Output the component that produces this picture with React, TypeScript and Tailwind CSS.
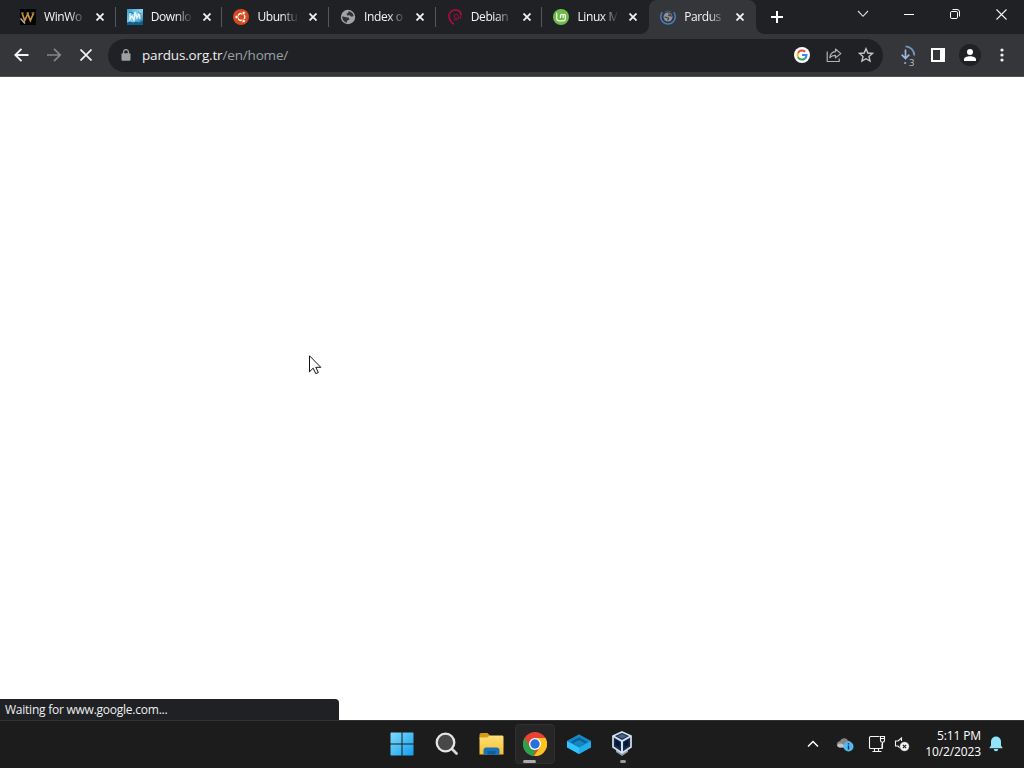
import type { ReactNode } from "react";

function WinWorldIcon() {
  return (
    <svg width="16" height="16" viewBox="0 0 16 16">
      <rect width="16" height="16" fill="#050505" />
      <path d="M2.2 4.500l2.500 7L7.800 5l2.600 6.500 3-7" fill="none" stroke="#c59638" strokeWidth="1.700" />
      <path d="M.5 9.500l4.500 5" stroke="#b9b9b9" strokeWidth="1.3" />
      <path d="M1.200 4h2.500M6.500 4h2.500M11.500 4h3" stroke="#d6a84a" strokeWidth="1" />
    </svg>
  );
}

function DownloadSiteIcon() {
  return (
    <svg width="16" height="16" viewBox="0 0 16 16">
      <defs>
        <linearGradient id="dl" x1="0" y1="0" x2="1" y2="1">
          <stop offset="0" stopColor="#2f9bc4" />
          <stop offset=".5" stopColor="#8ed3ee" />
          <stop offset="1" stopColor="#0a6ba6" />
        </linearGradient>
      </defs>
      <rect width="16" height="16" fill="url(#dl)" />
      <path d="M0 13.500l3-1 3 1 3-1 3 1 4-2v4.500H0z" fill="#10608f" />
      <path d="M3 4v6l2-3 2 4 1-8 2 6 2-4 1 5" fill="none" stroke="#e9faff" strokeWidth="1.3" />
      <path d="M2 4l3-1 1 2M11 3l3 2" fill="none" stroke="#14628e" strokeWidth=".7" />
    </svg>
  );
}

function UbuntuIcon() {
  return (
    <svg width="16" height="16" viewBox="0 0 16 16">
      <circle cx="8" cy="8" r="8" fill="#d9491e" />
      <circle cx="8.300" cy="8" r="3.500" fill="none" stroke="#fff" strokeWidth="1.400" />
      <g fill="#fff" stroke="#d9491e" strokeWidth=".8">
        <circle cx="3.600" cy="8" r="1.700" />
        <circle cx="10.700" cy="3.900" r="1.700" />
        <circle cx="10.700" cy="12.100" r="1.700" />
      </g>
    </svg>
  );
}

function GlobeIcon() {
  return (
    <svg width="16" height="16" viewBox="0 0 16 16">
      <circle cx="8" cy="8" r="7.2" fill="#a1a4a7" />
      <path d="M2.3 7.200L6 8.300l3 .4.400 1.800-2.400 1.200v1.900C4.200 13.200 2 10.600 2.300 7.200z" fill="#303235" />
      <path d="M8.500 2.300c2.600.2 4.600 2 5.100 4.700l-2 .7-2-1.500-2.300.2-.9-1.700 1.800-.8z" fill="#303235" />
    </svg>
  );
}

function DebianIcon() {
  return (
    <svg width="16" height="16" viewBox="0 0 16 16" fill="none" stroke="#b20d40" strokeLinecap="round">
      <path d="M9.200 8.800c-2 .6-3-1.500-1.500-2.900 1.700-1.400 4.200-.2 4 2-.2 2.100-2.500 3.400-4.500 2.800" strokeWidth="1" />
      <path d="M14 5.500C13.800 2 10.500.5 7.500 1 3.500 1.500 1.300 5 2.100 8.500c.5 2.500 2.100 4.800 4.400 6.400" strokeWidth="1.5" />
      <path d="M13.900 5.300c.5 1.700-.1 3.200-1 4.400" strokeWidth="1" />
    </svg>
  );
}

function MintIcon() {
  return (
    <svg width="16" height="16" viewBox="0 0 16 16">
      <circle cx="8" cy="8" r="8" fill="#70b94d" />
      <path d="M3.700 3.800v5.400c0 1.700 1 2.700 2.600 2.700h3.500c1.600 0 2.600-1 2.600-2.600V6.800c0-1.900-2.200-1.900-2.200 0V9M10.200 6.800c0-1.900-2.700-1.900-2.700 0V9" fill="none" stroke="#f2ffe9" strokeWidth="1.200" />
    </svg>
  );
}

function PardusLoadingIcon() {
  return (
    <svg width="16" height="16" viewBox="0 0 16 16" fill="none">
      <circle cx="8" cy="8" r="4.500" fill="#909397" />
      <path d="M4.500 8l2.500.6 1.500.3v1.400l-1.300.8M8 4.800c1.700 0 3 .9 3.300 2.300l-1.500-.3-1.800-.3" stroke="#404247" strokeWidth="1.100" />
      <path d="M2.300 3.200A7.300 7.300 0 1 0 13.700 3.200" stroke="#457bc7" strokeWidth="1.500" />
      <path d="M4.700 2.900a6 6 0 0 1 6.600 0" stroke="#3a5d91" strokeWidth=".9" />
    </svg>
  );
}

function CrossIcon({ size = 8, width = 1.8 }: { size?: number; width?: number }) {
  return (
    <svg width={size} height={size} viewBox={`0 0 ${size} ${size}`}>
      <path d={`M.5.5L${size - 0.5} ${size - 0.5}M${size - 0.5}.5L.5 ${size - 0.5}`} stroke="#f2f3f4" strokeWidth={width} />
    </svg>
  );
}

const tabs: { title: string; icon: ReactNode }[] = [
  { title: "WinWo", icon: <WinWorldIcon /> },
  { title: "Downlo", icon: <DownloadSiteIcon /> },
  { title: "Ubuntu", icon: <UbuntuIcon /> },
  { title: "Index o", icon: <GlobeIcon /> },
  { title: "Debian", icon: <DebianIcon /> },
  { title: "Linux M", icon: <MintIcon /> },
  { title: "Pardus", icon: <PardusLoadingIcon /> },
];

function Tab({ title, icon, active, divider }: { title: string; icon: ReactNode; active: boolean; divider: boolean }) {
  return (
    <div className={`relative flex h-[34px] w-[106.7px] shrink-0 items-center pl-[11px] ${active ? "rounded-t-[8px] bg-[#35363a]" : ""}`}>
      {active && (
        <>
          <span className="absolute bottom-0 -left-2 size-2 bg-[radial-gradient(circle_at_0_0,transparent_7.5px,#35363a_8px)]" />
          <span className="absolute -right-2 bottom-0 size-2 bg-[radial-gradient(circle_at_100%_0,transparent_7.5px,#35363a_8px)]" />
        </>
      )}
      <span className="shrink-0">{icon}</span>
      <span className="ml-[8px] w-[40px] text-[12px] leading-4 tracking-[-0.4px] whitespace-nowrap text-[#f4f5f6] [mask-image:linear-gradient(90deg,#000_62%,transparent_105%)]">
        {title}
      </span>
      <span className="ml-[12px] shrink-0"><CrossIcon /></span>
      {divider && <span className="absolute top-[7px] right-0 h-5 w-px bg-[#55575b]" />}
    </div>
  );
}

function TitleBar() {
  return (
    <header className="flex h-[34px] bg-[#202124] pl-[9px]">
      {tabs.map((t, i) => (
        <Tab key={t.title} title={t.title} icon={t.icon} active={i === 6} divider={i < 5} />
      ))}
      <span className="ml-[15px] flex items-center">
        <svg width="12" height="12" viewBox="0 0 12 12"><path d="M6 0v12M0 6h12" stroke="#fff" strokeWidth="2" /></svg>
      </span>
      <div className="ml-auto flex h-7 text-white">
        <span className="flex w-[46px] items-center justify-center">
          <svg width="12" height="8" viewBox="0 0 12 8"><path d="M1 1l5 5.300L11 1" fill="none" stroke="#dfe0e1" strokeWidth="1.100" /></svg>
        </span>
        <span className="flex w-[46px] items-center justify-center"><span className="h-px w-[10px] bg-white" /></span>
        <span className="flex w-[46px] items-center justify-center">
          <svg width="10" height="10" viewBox="0 0 10 10" fill="none" stroke="#fff"><rect x=".5" y="2.500" width="7" height="7" rx="1.300" /><path d="M2.500.5H7a2.500 2.500 0 0 1 2.500 2.500v4.500" /></svg>
        </span>
        <span className="flex w-[46px] items-center justify-center"><CrossIcon size={11} width={1.1} /></span>
      </div>
    </header>
  );
}

function Cell({ children, className = "w-8" }: { children: ReactNode; className?: string }) {
  return <span className={`flex shrink-0 items-center justify-center ${className}`}>{children}</span>;
}

function Toolbar() {
  return (
    <div className="flex h-[43px] items-center border-b border-[#515256] bg-[#35363a] pl-[6px]">
      <Cell>
        <svg width="16" height="14" viewBox="0 0 16 14" fill="none" stroke="#f1f3f4" strokeWidth="1.900"><path d="M14.500 7H1.500M7.500.8L1.300 7l6.200 6.200" /></svg>
      </Cell>
      <Cell>
        <svg width="16" height="14" viewBox="0 0 16 14" fill="none" stroke="#85878a" strokeWidth="1.700"><path d="M1 7h13M8 .8L14.200 7 8 13.200" /></svg>
      </Cell>
      <Cell><CrossIcon size={12} width={1.7} /></Cell>
      <div className="ml-[6px] flex h-[33px] w-[775px] items-center rounded-full bg-[#202124] pr-[1px] pl-[13px]">
        <svg width="10" height="12" viewBox="0 0 10 12"><rect x=".5" y="4.300" width="9" height="7.500" rx="1" fill="#9b9ea2" /><path d="M2.600 5V3a2.400 2.400 0 0 1 4.800 0v2" fill="none" stroke="#9b9ea2" strokeWidth="1.300" /></svg>
        <span className="ml-[11px] text-[13.500px] leading-5 tracking-[-0.17px] text-[#9aa0a6]"><span className="text-[#eeeff0]">pardus.org.tr</span>/en/home/</span>
        <div className="ml-auto flex">
          <Cell>
            <svg width="16" height="16" viewBox="0 0 16 16" fill="none" strokeWidth="2"><circle cx="8" cy="8" r="8" fill="#fff" /><path d="M11.200 4.800A4.500 4.500 0 0 0 4 5.900" stroke="#ea4335" /><path d="M4 5.900a4.500 4.500 0 0 0 0 4.200" stroke="#fbbc05" /><path d="M4 10.100a4.500 4.500 0 0 0 6.800 1.500" stroke="#34a853" /><path d="M10.800 11.600C12 10.700 12.500 9.500 12.500 8H8" stroke="#4285f4" /></svg>
          </Cell>
          <Cell>
            <svg width="16" height="16" viewBox="0 0 16 16" fill="none" stroke="#b0b3b6" strokeWidth="1.200"><path d="M1.200 4.500v10h12v-3" /><path d="M3.800 10.700C4.200 7 6.300 5 9.500 4.700V2l5.300 4.600-5.300 4.300V8.300c-2.500-.1-4.300.6-5.700 2.400z" strokeLinejoin="round" /></svg>
          </Cell>
          <Cell>
            <svg width="16" height="16" viewBox="0 0 16 16" fill="none" stroke="#c3c5c8" strokeWidth="1.400"><path d="M8 1.700l1.850 4.350 4.700.4L11 9.550l1.050 4.600L8 11.700l-4.050 2.450L5 9.550 1.450 6.450l4.700-.4z" /></svg>
          </Cell>
        </div>
      </div>
      <div className="ml-[10px] flex h-8">
        <Cell className="w-[29px]">
          <svg width="18" height="24" viewBox="0 0 18 24" fill="none" stroke="#91acd4" strokeWidth="1.700">
            <path d="M6.500 6.500v9M2.700 11.700l3.800 3.800 3.800-3.800" stroke="#9bb8df" />
            <path d="M6.500 3.300a9 9 0 0 1 8.800 9.200" stroke="#7593c3" strokeWidth="1.800" />
            <path d="M5.200 20h1.900" />
            <text x="10" y="22.500" fill="#bfc3c9" stroke="none" fontFamily="Open Sans, sans-serif" fontSize="9.500">3</text>
          </svg>
        </Cell>
        <Cell>
          <svg width="14" height="14" viewBox="0 0 14 14"><path d="M0 0h14v14H0zM2 2v10h7V2z" fill="#fff" fillRule="evenodd" /></svg>
        </Cell>
        <Cell>
          <svg width="22" height="22" viewBox="0 0 22 22"><circle cx="11" cy="11" r="11" fill="#202124" /><circle cx="11" cy="8" r="3" fill="#fff" /><path d="M5 17v-1.500c0-2 3-3.200 6-3.200s6 1.200 6 3.200V17z" fill="#fff" /></svg>
        </Cell>
        <Cell>
          <svg width="4" height="14" viewBox="0 0 4 14" fill="#f1f3f4"><circle cx="2" cy="2" r="1.600" /><circle cx="2" cy="7" r="1.600" /><circle cx="2" cy="12" r="1.600" /></svg>
        </Cell>
      </div>
    </div>
  );
}

function Taskbar() {
  return (
    <footer className="flex h-12 items-center border-t border-[#303133] bg-[#1c1c1c] pb-px pl-[380px]">
      <Cell className="h-full w-[44px]">
        <svg width="24" height="24" viewBox="0 0 24 24">
          <defs><linearGradient id="win" x1="0" y1="0" x2="1" y2="1"><stop stopColor="#80dcfb" /><stop offset="1" stopColor="#129df0" /></linearGradient></defs>
          <path d="M1 .5h10.500v11H.5V1zM12.500.5H23l.5.5v10.500h-11zM.5 12.500h11v11H1l-.5-.5zM12.500 12.500h11V23l-.5.5H12.500z" fill="url(#win)" />
        </svg>
      </Cell>
      <Cell className="h-full w-[45px]">
        <svg width="24" height="24" viewBox="0 0 24 24"><path d="M16.500 16.500l5 5" stroke="#d7d7d7" strokeWidth="2.800" strokeLinecap="round" /><circle cx="10.500" cy="10.500" r="8.800" fill="#484848" stroke="#e5e5e5" strokeWidth="2.300" /></svg>
      </Cell>
      <Cell className="h-full w-11">
        <svg width="25" height="24" viewBox="0 0 25 24">
          <defs><linearGradient id="folder" x1="0" y1="0" x2="0" y2="1"><stop stopColor="#ffe07a" /><stop offset="1" stopColor="#f8be2c" /></linearGradient></defs>
          <path d="M.5 3c0-1.300.7-2 2-2h6l3 3-3 3h-8z" fill="#d79a15" />
          <path d="M.5 5.500H8l3-2h12.500l1 1V22.500H.5z" fill="url(#folder)" />
          <path d="M4.500 22.500v-4c0-2 1-3 3-3h10c2 0 3 1 3 3v4z" fill="#1573b8" /><path d="M8.500 19h8v3.500h-8z" fill="#0f5e9c" />
        </svg>
      </Cell>
      <div className="relative mx-[2px] flex h-10 w-10 items-center justify-center rounded-[4px] border border-[#303030] bg-[#262626]">
        <svg width="24" height="24" viewBox="0 0 24 24">
          <circle cx="12" cy="12" r="12" fill="#e94335" />
          <path d="M1.600 6L6.800 15 12 18l-1 6C4.800 23.500 0 18.500 0 12c0-2.200.6-4.300 1.600-6z" fill="#27a44c" />
          <path d="M12 6h10.400A12 12 0 0 1 11 24l6.200-9z" fill="#fcc31e" />
          <circle cx="12" cy="12" r="6" fill="#fff" /><circle cx="12" cy="12" r="4.700" fill="#2671df" />
        </svg>
        <span className="absolute bottom-0 left-[7px] h-[3px] w-[13px] rounded-full bg-[#aaa]" />
      </div>
      <Cell className="h-full w-11">
        <svg width="26" height="20" viewBox="0 0 26 20"><path d="M13 .5L25 7v6l-12 7L1 13V7z" fill="#117bc2" /><path d="M13 .5L25 7l-12 6.500L1 7z" fill="#1688c8" /><path d="M13 3.500L21.500 8 13 12.300 4.500 8z" fill="#0a6092" /><path d="M13 6l6 3-6 3.300L7 9z" fill="#1686be" /><path d="M1 7l12 6.500V20L1 13.500z" fill="#31c3ff" /><path d="M25 7l-12 6.500V20l12-6.500z" fill="#22aeea" /></svg>
      </Cell>
      <div className="relative flex h-full w-[42px] items-center justify-center">
        <svg width="22" height="26" viewBox="0 0 22 26">
          <path d="M5 17v4l6 4 6-4v-4z" fill="#8d9caf" />
          <path d="M11 1l9 4v11l-9 6-9-6V5z" fill="#172b4d" stroke="#d6e1ef" strokeWidth="1.700" />
          <path d="M2 5l9 5 9-5M11 10v12" fill="none" stroke="#d6e1ef" strokeWidth="2" />
          <path d="M11 3l5 2.200-5 2.400-5-2.400z" fill="#4b6284" /><path d="M4.500 9l4 2v5l-4-2zM17.500 9l-4 2v5l4-2z" fill="#071633" />
        </svg>
        <span className="absolute bottom-[4px] left-[19px] h-[3px] w-[6px] rounded-full bg-[#999]" />
      </div>
      <div className="ml-auto flex h-full items-center pr-[21px]">
        <Cell>
          <svg width="12" height="8" viewBox="0 0 12 8"><path d="M1 6.500l5-5 5 5" fill="none" stroke="#fff" strokeWidth="1.500" /></svg>
        </Cell>
        <Cell>
          <svg width="18" height="16" viewBox="0 0 18 16"><path d="M1 9.500A3.500 3.500 0 0 1 4 5a4.500 4.500 0 0 1 8-.5 4 4 0 0 1 2 7H4a3 3 0 0 1-3-2z" fill="#858585" /><path d="M1.200 9.500C2 6.500 6 7 8 9l3 2.500H4c-1.500 0-2.500-.8-2.800-2z" fill="#c2c2c2" /><circle cx="12.500" cy="10.500" r="5" fill="#54b9f1" /><path d="M12.500 9.500v4M12.500 7.300v1.300" stroke="#123247" strokeWidth="1.400" /></svg>
        </Cell>
        <Cell className="w-[31px]">
          <svg width="18" height="18" viewBox="0 0 18 18" fill="none" stroke="#f5f5f5" strokeWidth="1.100"><path d="M11.500 1.500H2.500a1 1 0 0 0-1 1v10a1 1 0 0 0 1 1h11.500V8.500M4.500 16.500h9M6.500 13.500v3M10.500 13.500v3" /><path d="M12.500 1.500h4v4c0 1-1 1.700-2 1.700s-2-.7-2-1.700zM14.500 7.500v6M12.500 3.500h4" /></svg>
        </Cell>
        <Cell className="w-[20px]">
          <svg width="16" height="16" viewBox="0 0 16 16" fill="none" stroke="#f5f5f5"><path d="M7.500 5V2L4 5H1.500v5H4l2 2" strokeWidth="1.100" /><circle cx="10.500" cy="10.500" r="4.800" fill="#f5f5f5" stroke="#1c1c1c" strokeWidth=".5" /><path d="M8.800 8.800l3.400 3.400M12.200 8.800l-3.400 3.400" stroke="#1c1c1c" strokeWidth="1.100" /></svg>
        </Cell>
        <div className="flex w-[69px] flex-col items-end text-[12px] leading-4 tracking-[-0.12px] whitespace-nowrap text-white"><span>5:11 PM</span><span>10/2/2023</span></div>
        <span className="ml-[8px]">
          <svg width="14" height="16" viewBox="0 0 14 16" fill="#91e4fb"><path d="M7 .5a5 5 0 0 1 5 5v4l1.800 2.700H.2L2 9.500v-4a5 5 0 0 1 5-5zM4.800 13h4.400a2.200 2.200 0 0 1-4.400 0z" /></svg>
        </span>
      </div>
    </footer>
  );
}

export default function App() {
  return (
    <div className="relative flex h-[768px] w-[1024px] flex-col overflow-hidden bg-white font-['Open_Sans','Noto_Sans',sans-serif]">
      <TitleBar />
      <Toolbar />
      <main className="flex flex-1 flex-col justify-end bg-white">
        <div className="flex h-[21px] w-[339px] items-center rounded-tr-[4px] bg-[#202124] pl-[5px] text-[12px] tracking-[-0.24px] text-[#eeeff0]">Waiting for www.google.com...</div>
      </main>
      <Taskbar />
      <svg className="absolute top-[355px] left-[309px]" width="13" height="20" viewBox="0 0 13 20"><path d="M.5.8v16l3.700-3.600 2.600 5.500 2.500-1.200-2.500-5.200h5z" fill="#fff" stroke="#111" /></svg>
    </div>
  );
}
